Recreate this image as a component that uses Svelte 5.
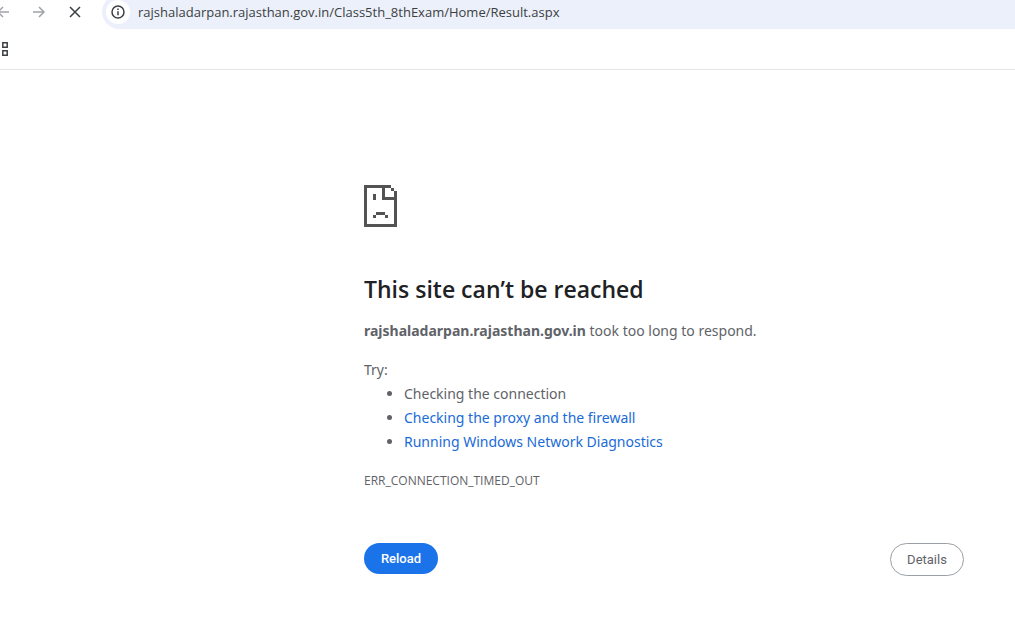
<script>
    let url = "rajshaladarpan.rajasthan.gov.in/Class5th_8thExam/Home/Result.aspx";
    let host = "rajshaladarpan.rajasthan.gov.in";
</script>

<svelte:head>
    <title>{host}</title>
</svelte:head>

<header>
    <div class="toolbar">
        <button class="nav" aria-label="Back" disabled>
            <svg width="14" height="14" viewBox="0 0 14 14">
                <path d="M13 7H2M7 2L2 7l5 5" />
            </svg>
        </button>
        <button class="nav" aria-label="Forward" disabled>
            <svg width="14" height="14" viewBox="0 0 14 14">
                <path d="M1 7h11M7 2l5 5-5 5" />
            </svg>
        </button>
        <button class="nav" aria-label="Stop loading">
            <svg width="14" height="14" viewBox="0 0 14 14">
                <path d="M2 2l10 10M12 2L2 12" />
            </svg>
        </button>
        <div class="omnibox">
            <button class="site-info" aria-label="View site information">
                <svg width="14" height="14" viewBox="0 0 14 14">
                    <circle cx="7" cy="7" r="6" />
                    <path d="M7 6.2v4M7 3.6v1.5" />
                </svg>
            </button>
            <input type="text" aria-label="Address" spellcheck="false" bind:value={url}>
        </div>
    </div>
    <div class="bookmarks">
        <button class="apps" aria-label="Apps">
            <svg width="6" height="14" viewBox="0 0 6 14">
                <path d="M.8.8h4.4v4.4H.8zM.8 8.8h4.4v4.4H.8z" />
            </svg>
        </button>
    </div>
</header>

<main>
    <svg class="sad-page" width="33" height="42" viewBox="0 0 11 14" shape-rendering="crispEdges">
        <path d="M0 0h9v1H7v3h3V2h1v12H0zM1 1v12h9V5H6V1zM9 1h1v1H9zM3 3h1v2H3zM4 9h3v1H4zM3 10h1v1H3zM7 10h1v1H7z" fill-rule="evenodd" />
    </svg>
    <h1>This site can’t be reached</h1>
    <p><strong>{host}</strong> took too long to respond.</p>
    <div class="suggestions">
        <p>Try:</p>
        <ul>
            <li>Checking the connection</li>
            <li><a href="#proxy">Checking the proxy and the firewall</a></li>
            <li><a href="#diagnostics">Running Windows Network Diagnostics</a></li>
        </ul>
    </div>
    <div class="error-code">ERR_CONNECTION_TIMED_OUT</div>
    <div class="actions">
        <button class="reload">Reload</button>
        <button class="details">Details</button>
    </div>
</main>

<style>
    :global(body) {
        background: #fff;
        color: #5f6368;
        font-family: "Noto Sans", "Segoe UI", sans-serif;
        font-size: 14px;
        line-height: 24px;
    }

    button {
        display: flex;
        align-items: center;
        justify-content: center;
        box-sizing: border-box;
        padding: 0;
        border: none;
        background: none;
        cursor: pointer;
    }

    header {
        border-bottom: 1px solid #e3e5e8;
    }

    header svg {
        fill: none;
        stroke: #3c4043;
        stroke-width: 1.5;
    }

    .toolbar {
        display: flex;
        align-items: flex-end;
        height: 29px;
        margin-left: -15px;
        overflow: hidden;
    }

    .nav {
        flex: none;
        width: 36px;
        height: 34px;
    }

    .nav:disabled svg {
        stroke: #a0a3a7;
    }

    .omnibox {
        display: flex;
        flex: 1;
        align-items: center;
        box-sizing: border-box;
        height: 34px;
        margin-left: 9px;
        padding-left: 4px;
        border-radius: 17px 0 0 17px;
        background: #ebf0fa;
    }

    .site-info {
        flex: none;
        width: 24px;
        height: 24px;
        border-radius: 50%;
        background: #fff;
    }

    input {
        flex: 1;
        min-width: 0;
        padding: 0 8px;
        border: none;
        outline: none;
        background: none;
        color: #3c4043;
        font-family: "Open Sans", sans-serif;
        font-size: 13px;
    }

    .bookmarks {
        display: flex;
        align-items: center;
        height: 40px;
        padding-left: 2px;
    }

    main {
        box-sizing: border-box;
        max-width: 651px;
        margin-left: auto;
        padding: 115px 51px 0 0;
    }

    .sad-page {
        display: block;
        fill: #535353;
    }

    h1 {
        margin: 48px 0 16px;
        color: #202124;
        font-family: "Open Sans", sans-serif;
        font-size: 23px;
        font-weight: 600;
        line-height: 28px;
    }

    p {
        margin: 0;
    }

    .suggestions {
        margin-top: 15px;
    }

    ul {
        margin: 0;
        padding-left: 40px;
    }

    a {
        color: #1a6bd6;
        text-decoration: none;
    }

    .error-code {
        margin-top: 15px;
        font-family: "Open Sans", sans-serif;
        font-size: 12px;
    }

    .actions {
        display: flex;
        align-items: flex-start;
        justify-content: space-between;
        margin-top: 50px;
    }

    .reload,
    .details {
        min-width: 74px;
        padding: 8px 16px;
        border-radius: 20px;
        font-family: Roboto, sans-serif;
        font-size: 13px;
        line-height: 15px;
    }

    .reload {
        background: #1a73e8;
        color: #fff;
        font-weight: 500;
    }

    .details {
        border: 1px solid #9aa0a6;
        color: #5f6368;
    }
</style>
